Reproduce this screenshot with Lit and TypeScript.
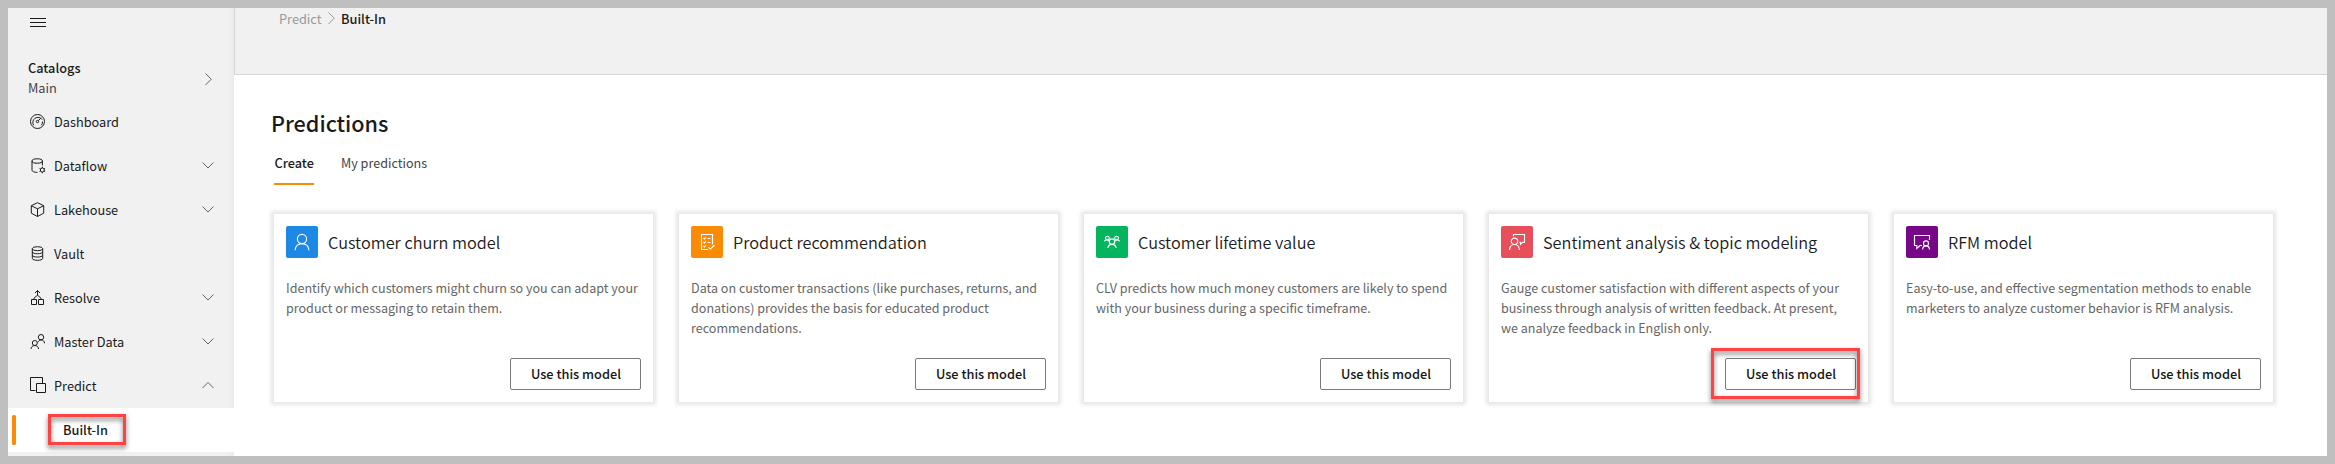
import { LitElement, html, svg, css, nothing } from "lit";
import { customElement, property } from "lit/decorators.js";

const icons: Record<string, unknown> = {
  menu: svg`<path d="M0 2.5H16M0 6.5H16M0 10.5H16"/>`,
  dashboard: svg`<circle cx="7.5" cy="7.5" r="7"/><path d="M3.7 11.3A5 5 0 1 1 12.1 5.6M11.3 11.3A5 5 0 0 0 12.5 7.5M8.3 6.7L11.2 3.8"/><circle cx="7.5" cy="7.5" r="1.2"/>`,
  dataflow: svg`<ellipse cx="7.2" cy="3" rx="5.2" ry="2.2"/><path d="M2 3V12.3C2 13.5 4.3 14.3 7.4 14.4M12.4 3V7.4"/><circle cx="12.3" cy="12" r="2"/><path d="M12.3 8.7V10M12.3 14V15.3M9.5 10.4L10.6 11M14 13L15.1 13.6M9.5 13.6L10.6 13M14 11L15.1 10.4"/>`,
  lakehouse: svg`<path d="M7.5 .7L13.7 3.7V11.2L7.5 14.5L1.3 11.2V3.7ZM1.3 3.7L7.5 6.8L13.7 3.7M7.5 6.8V14.5"/>`,
  vault: svg`<ellipse cx="7.5" cy="2.7" rx="5.2" ry="2"/><path d="M2.3 2.7V12.3C2.3 15 12.7 15 12.7 12.3V2.7M2.3 5.8C2.3 8.4 12.7 8.4 12.7 5.8M2.3 9.1C2.3 11.7 12.7 11.7 12.7 9.1"/>`,
  resolve: svg`<path d="M1.5 9.5H6.5V14.5H1.5ZM8.5 9.5H13.5V14.5H8.5ZM7.5 .5V5.5M5 3L7.5 .5L10 3M4 9.5V8.2L7.5 5.2L11 8.2V9.5"/>`,
  master: svg`<circle cx="11" cy="3.2" r="2.7"/><path d="M8 8.3C8.6 6.8 9.6 5.9 11 5.9C13 5.9 14.4 7.2 14.5 9.3"/><circle cx="4.8" cy="9" r="2.5"/><path d="M1 15C1.2 12.8 2.7 11.5 4.8 11.5C6.9 11.5 8.4 12.8 8.6 15"/>`,
  predict: svg`<path d="M5.5 12.5H.5V-.5H12.5V5.5M6.5 5.5H15.5V14.5H6.5Z"/>`,
  person: svg`<circle cx="8" cy="5" r="4.6"/><path d="M1 16.2C1.3 12.4 4 9.6 8 9.6C12 9.6 14.7 12.4 15 16.2"/>`,
  checklist: svg`<path d="M9 15.5H2.5V.5H13.5V10.5M4.5 4L5.4 4.9L7 3.3M8.5 4.5H11.5M4.5 8L5.4 8.9L7 7.3M8.5 8.5H11.5M4.5 12L5.4 12.9L7 11.3M9.5 13.4L11.3 15L15.5 11.3"/>`,
  group: svg`<circle cx="8" cy="7.6" r="2.8"/><path d="M3.8 13.8C4.2 11.8 5.8 10.4 8 10.4C10.2 10.4 11.8 11.8 12.2 13.8"/><circle cx="3.4" cy="4" r="1.8"/><circle cx="12.6" cy="4" r="1.8"/><path d="M.3 7.4C.8 6.2 1.9 5.8 3.4 5.8C4.4 5.8 5 6.2 5.5 6.8M15.7 7.4C15.2 6.2 14.1 5.8 12.6 5.8C11.6 5.8 11 6.2 10.5 6.8"/>`,
  feedback: svg`<circle cx="5.5" cy="7.3" r="3.2"/><path d="M.5 16C.7 12.8 2.6 10.5 5.5 10.5C8.4 10.5 10.2 12.8 10.5 16M4.5 2.2V.5H15.5V8.3H13.5L11.5 10.4V8.3H10.5"/>`,
  chat: svg`<path d="M15.5 6V1.5H.5V11.5H2.8V14.5L6 11.5H8"/><circle cx="12" cy="9.4" r="2.5"/><path d="M8.6 15.5C8.8 13.3 10.2 11.9 12 11.9C13.8 11.9 15.3 13.3 15.5 15.5"/>`,
  down: svg`<path d="M.5 .5L6 6L11.5 .5"/>`,
  up: svg`<path d="M.5 6L6 .5L11.5 6"/>`,
  right: svg`<path d="M.5 .5L6.3 6.2L.5 12"/>`,
};
const icon = (name: string, w: number, h: number) =>
  html`<svg class="ico ${name}" width=${w} height=${h} viewBox="0 0 ${w} ${h}">${icons[name]}</svg>`;

const shared = css`
  :host { font-family: "Noto Sans CJK SC", sans-serif; }
  * { box-sizing: border-box; }
  .ico { display: block; flex: none; overflow: visible; fill: none; stroke: currentColor; stroke-width: 1; }
`;

@customElement("model-card")
export class ModelCard extends LitElement {
  @property() name = "";
  @property() glyph = "";
  @property() tone = "";
  @property({ attribute: false }) lines: string[] = [];
  @property({ type: Boolean }) marked = false;
  static styles = [shared, css`
    :host { display: flex; flex-direction: column; box-sizing: border-box; width: 379px; height: 188px; padding: 12px;
      background: #fff; box-shadow: 0 0 4px 3px rgba(0,0,0,.1); }
    .head { display: flex; align-items: center; gap: 10px; height: 32px; }
    .tile { width: 32px; height: 32px; border-radius: 2px; color: #fff; display: flex; align-items: center; justify-content: center; }
    .tile .ico { stroke-width: 1.15; }
    .blue { background: #1e88e5; } .orange { background: #fa8b05; } .green { background: #04b45f; }
    .red { background: #e7505a; } .purple { background: #760787; }
    .name { font-size: 16.3px; font-weight: 350; color: #1b1b1b; white-space: nowrap; line-height: 32px; }
    .desc { margin-top: 20px; font-size: 12.56px; line-height: 20px; color: #666; white-space: nowrap; }
    .foot { position: relative; margin-top: auto; align-self: flex-end; }
    button { display: block; width: 131px; height: 32px; padding: 0 0 0 1px; border: 1px solid #7a7a7a; border-radius: 2px; background: #fff;
      font: 500 12.75px/30px "Noto Sans CJK SC", sans-serif; color: #151515; }
    .mark { position: absolute; left: -14px; top: -10px; width: 149px; height: 51px; border: 3px solid #ff4343;
      filter: drop-shadow(0 3px 2.5px rgba(0,0,0,.55)); }
  `];
  render() {
    return html`
      <div class="head"><div class="tile ${this.tone}">${icon(this.glyph, 16, 16)}</div><div class="name">${this.name}</div></div>
      <div class="desc">${this.lines.map((l) => html`<div>${l}</div>`)}</div>
      <div class="foot"><button>Use this model</button>${this.marked ? html`<div class="mark"></div>` : nothing}</div>`;
  }
}

const nav = [
  ["dashboard", "Dashboard", ""], ["dataflow", "Dataflow", "down"], ["lakehouse", "Lakehouse", "down"], ["vault", "Vault", ""],
  ["resolve", "Resolve", "down"], ["master", "Master Data", "down"], ["predict", "Predict", "up"],
];
const models = [
  { name: "Customer churn model", glyph: "person", tone: "blue", lines: ["Identify which customers might churn so you can adapt your", "product or messaging to retain them."] },
  { name: "Product recommendation", glyph: "checklist", tone: "orange", lines: ["Data on customer transactions (like purchases, returns, and", "donations) provides the basis for educated product", "recommendations."] },
  { name: "Customer lifetime value", glyph: "group", tone: "green", lines: ["CLV predicts how much money customers are likely to spend", "with your business during a specific timeframe."] },
  { name: "Sentiment analysis & topic modeling", glyph: "feedback", tone: "red", marked: true, lines: ["Gauge customer satisfaction with different aspects of your", "business through analysis of written feedback. At present,", "we analyze feedback in English only."] },
  { name: "RFM model", glyph: "chat", tone: "purple", lines: ["Easy-to-use, and effective segmentation methods to enable", "marketers to analyze customer behavior is RFM analysis."] },
];

@customElement("app-root")
export class AppRoot extends LitElement {
  static styles = [shared, css`
    :host { display: flex; box-sizing: border-box; width: 2335px; height: 464px; border: 8px solid #bfbfbf; background: #fff;
      overflow: hidden; font-size: 12.75px; color: #1b1b1b; }
    .side { width: 226px; flex: none; display: flex; flex-direction: column;
      background: linear-gradient(to right, #f1f1f1 219px, #ebebeb 226px); }
    .burger { height: 28px; padding: 8px 0 0 22px; }
    .catalog { display: flex; height: 64px; padding: 0 22px 0 20px; justify-content: space-between; }
    .catalog div { line-height: 20px; }
    .catalog .who { padding-top: 22px; }
    .catalog b { display: block; font-weight: 500; }
    .catalog .main { color: #444; }
    .catalog .ico { margin-top: 37px; color: #666; }
    .item { display: flex; align-items: center; height: 44px; padding: 0 20px 0 22px; line-height: 44px; flex: none; }
    .item .label { margin-left: 9px; flex: 1; }
    .item .ico:first-child { margin-top: -1px; }
    .item .down, .item .up { color: #666; margin-top: -2px; }
    .active { display: flex; align-items: center; height: 44px; flex: none; background: #fff; padding-left: 4px; }
    .bar { width: 4px; height: 30px; border-radius: 1.5px; background: #fa8b05; }
    .built { position: relative; margin-left: 47px; font-weight: 500; line-height: 44px; }
    .mark { position: absolute; left: -15px; top: 6px; width: 78px; height: 31px; border: 3px solid #ff4343;
      filter: drop-shadow(0 3px 2.5px rgba(0,0,0,.55)); }
    .content { flex: 1; display: flex; flex-direction: column; }
    .top { height: 67px; background: #f1f1f1; border-left: 1px solid #d6d6d6; border-bottom: 1px solid #d6d6d6; display: flex;
      padding: 1px 0 0 44px; line-height: 20px; color: #999; }
    .top .ico { margin: 3px 6px 0 6.5px; }
    .top b { font-weight: 500; color: #1b1b1b; }
    .body { padding: 30px 40px 0; }
    h1 { margin: 0 0 0 -3px; font-size: 21.6px; font-weight: 500; line-height: 36px; }
    .tabs { display: flex; gap: 27px; height: 43px; margin-top: 10px; line-height: 23px; }
    .tab { color: #444; height: 34px; font-size: 12.6px; }
    .tab.on { width: 40px; padding-left: .4px; color: #1b1b1b; font-weight: 500; border-bottom: 2px solid #fa8b05; font-size: 12.75px; }
    .cards { display: flex; gap: 26px; margin-top: 20px; }
  `];
  render() {
    return html`
      <div class="side">
        <div class="burger">${icon("menu", 16, 13)}</div>
        <div class="catalog"><div class="who"><b>Catalogs</b><div class="main">Main</div></div>${icon("right", 7, 13)}</div>
        ${nav.map(([g, l, c]) => html`<div class="item">${icon(g, 15, 15)}<div class="label">${l}</div>${c ? icon(c, 12, 7) : nothing}</div>`)}
        <div class="active"><div class="bar"></div><div class="built">Built-In<div class="mark"></div></div></div>
      </div>
      <div class="content">
        <div class="top"><span>Predict</span>${icon("right", 7, 13)}<b>Built-In</b></div>
        <div class="body">
          <h1>Predictions</h1>
          <div class="tabs"><div class="tab on">Create</div><div class="tab">My predictions</div></div>
          <div class="cards">${models.map((m) => html`<model-card .name=${m.name} .glyph=${m.glyph} .tone=${m.tone} .lines=${m.lines} .marked=${!!m.marked}></model-card>`)}</div>
        </div>
      </div>`;
  }
}
